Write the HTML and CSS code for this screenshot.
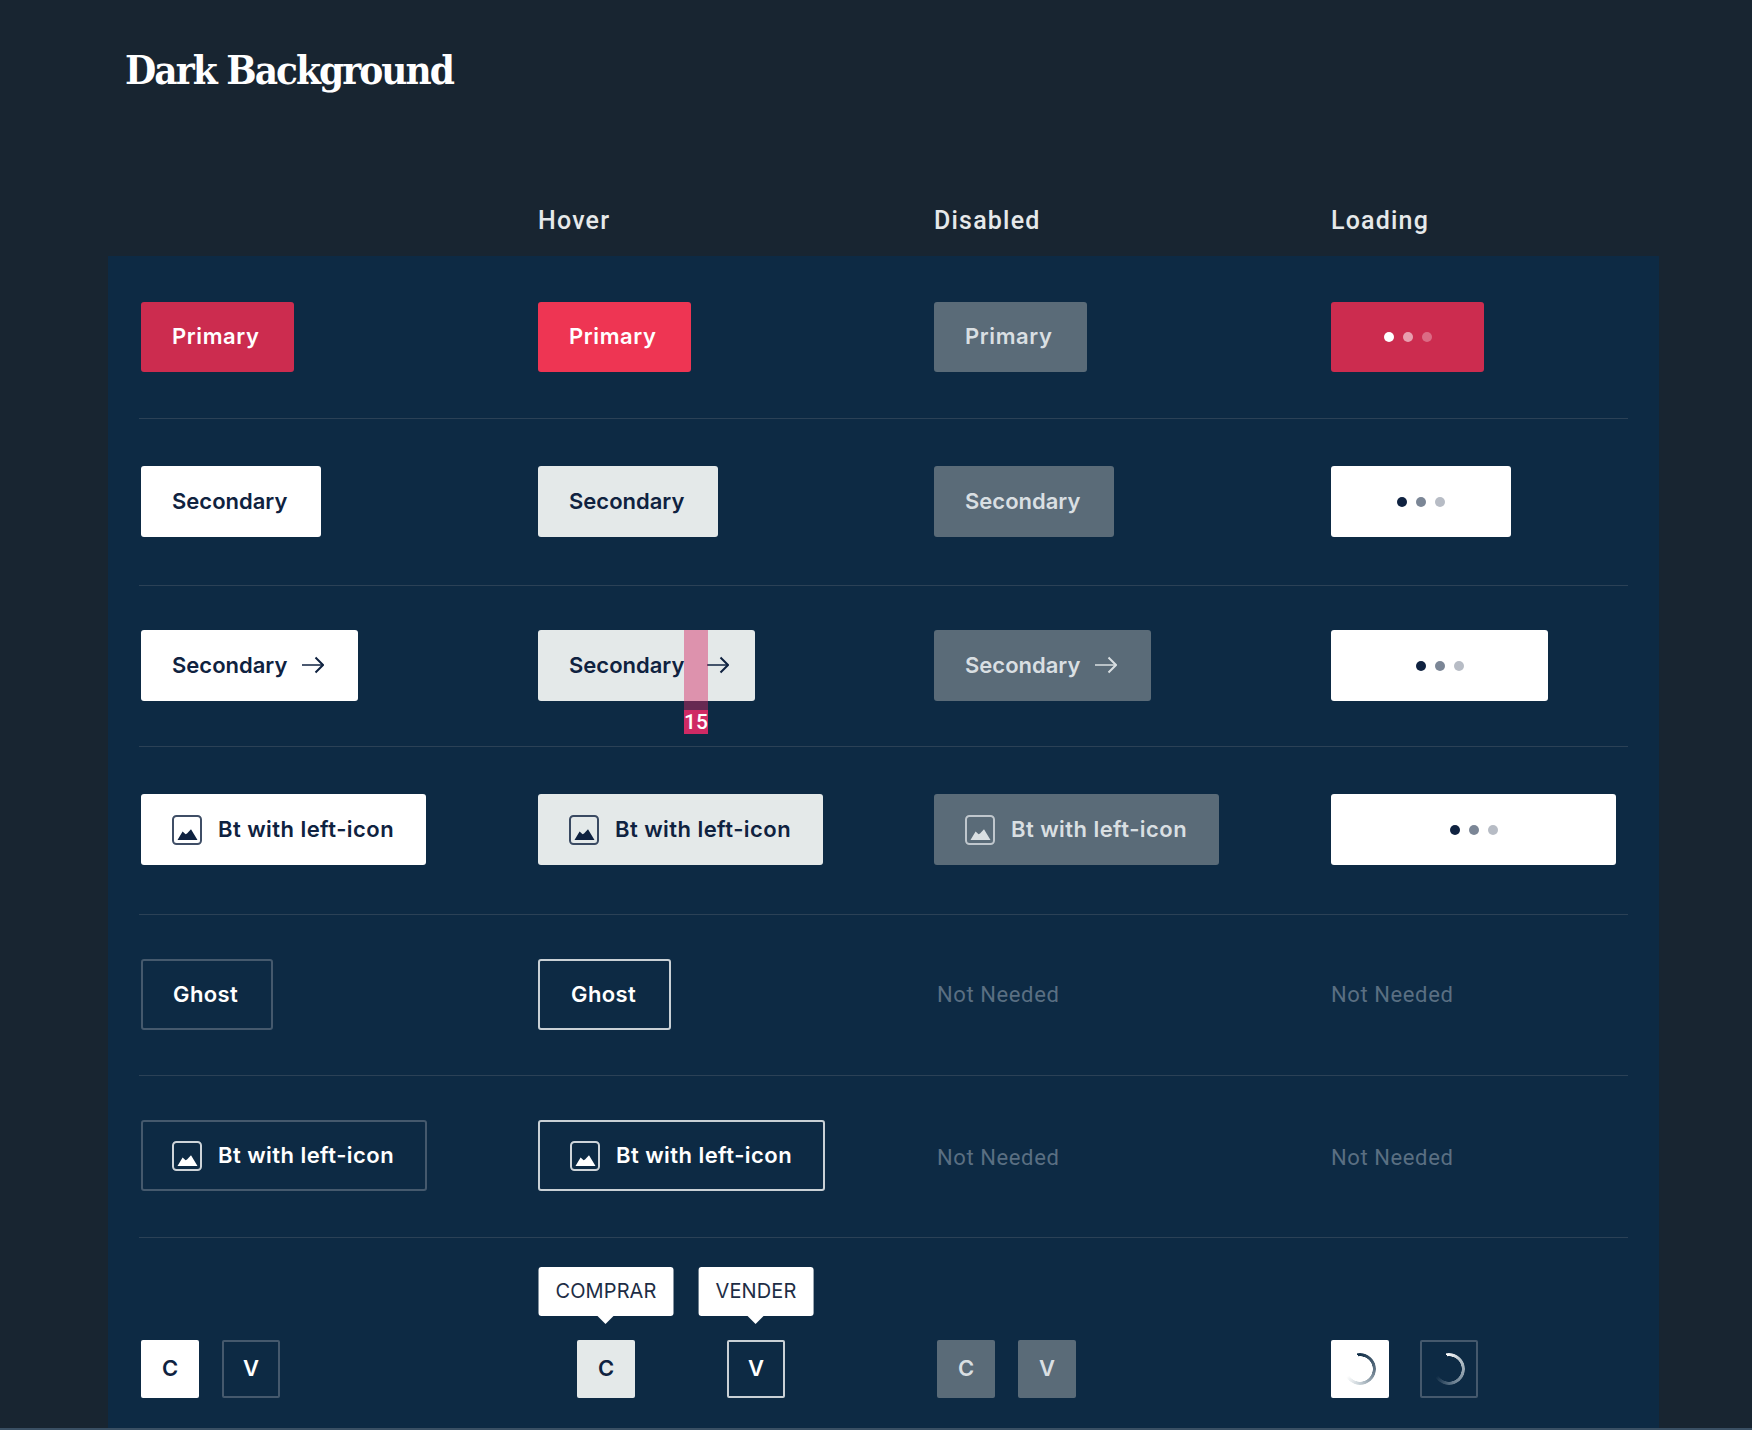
FILE: index.html
```html
<!DOCTYPE html>
<html lang="en">
<head>
<meta charset="utf-8">
<title>Dark Background</title>
<link rel="stylesheet" href="styles.css">
</head>
<body>
<svg class="defs" width="0" height="0" aria-hidden="true">
  <symbol id="pic" viewBox="0 0 30 30">
    <rect class="pic-frame" x="1" y="1" width="28" height="28" rx="3.5"/>
    <path class="pic-hill" d="M5.5 25 L10.6 16.4 L13.6 19.2 L15 18.600 L19 14.200 L25.500 25 Z"/>
  </symbol>
  <symbol id="arrow" viewBox="0 0 22 18">
    <path class="arrow-line" d="M0 9H20.500"/>
    <path class="arrow-head" d="M13.500 1.500L21 9l-7.500 7.500"/>
  </symbol>
</svg>
<main class="page">
  <h1 class="title">Dark Background</h1>
  <div class="heads">
    <div></div>
    <div class="head">Hover</div>
    <div class="head">Disabled</div>
    <div class="head">Loading</div>
  </div>
  <section class="panel">
    <div class="row r1">
      <a class="btn primary w153">Primary</a>
      <a class="btn primary-hover w153">Primary</a>
      <a class="btn disabled w153">Primary</a>
      <a class="btn primary w153"><span class="dots"><i></i><i></i><i></i></span></a>
    </div>
    <div class="row r2">
      <a class="btn white w180">Secondary</a>
      <a class="btn light w180">Secondary</a>
      <a class="btn disabled w180">Secondary</a>
      <a class="btn white w180"><span class="dots"><i></i><i></i><i></i></span></a>
    </div>
    <div class="row r3">
      <a class="btn white w217">Secondary<svg class="arrow"><use href="#arrow"/></svg></a>
      <a class="btn light w217">Secondary<svg class="arrow arrow-shift"><use href="#arrow"/></svg><span class="guide"><b class="guide-tag">15</b></span></a>
      <a class="btn disabled w217">Secondary<svg class="arrow"><use href="#arrow"/></svg></a>
      <a class="btn white w217"><span class="dots"><i></i><i></i><i></i></span></a>
    </div>
    <div class="row r4">
      <a class="btn white w285"><svg class="pic"><use href="#pic"/></svg>Bt with left-icon</a>
      <a class="btn light w285"><svg class="pic"><use href="#pic"/></svg>Bt with left-icon</a>
      <a class="btn disabled w285"><svg class="pic"><use href="#pic"/></svg>Bt with left-icon</a>
      <a class="btn white w285"><span class="dots"><i></i><i></i><i></i></span></a>
    </div>
    <div class="row r5">
      <a class="btn ghost w132">Ghost</a>
      <a class="btn ghost-hover w133">Ghost</a>
      <span class="none none-a">Not Needed</span>
      <span class="none">Not Needed</span>
    </div>
    <div class="row r6">
      <a class="btn ghost w286"><svg class="pic"><use href="#pic"/></svg>Bt with left-icon</a>
      <a class="btn ghost-hover w287"><svg class="pic"><use href="#pic"/></svg>Bt with left-icon</a>
      <span class="none none-a">Not Needed</span>
      <span class="none">Not Needed</span>
    </div>
    <div class="row last">
      <div class="tiles">
        <a class="tile white">C</a>
        <a class="tile ghost">V</a>
      </div>
      <div class="tiles tiles-hover">
        <a class="tile light">C<span class="tip">COMPRAR</span></a>
        <a class="tile ghost-hover">V<span class="tip">VENDER</span></a>
      </div>
      <div class="tiles tiles-disabled">
        <a class="tile disabled">C</a>
        <a class="tile disabled">V</a>
      </div>
      <div class="tiles tiles-loading">
        <a class="tile white"><span class="spin spin-dark"></span></a>
        <a class="tile ghost"><span class="spin spin-light"></span></a>
      </div>
    </div>
  </section>
</main>
</body>
</html>
```

FILE: styles.css
```css
* { box-sizing: border-box; }
html, body { margin: 0; padding: 0; }
body {
  background: #182531;
  height: 1430px;
  overflow: hidden;
  font-family: "Inter", "Liberation Sans", sans-serif;
}
.defs { position: absolute; }
.page {
  height: 1430px;
  padding: 0 93px 0 108px;
  border-bottom: 2px solid #3a5064;
  overflow: hidden;
}
.title {
  margin: 0;
  padding: 47px 0 0 17px;
  height: 200px;
  font-family: "DejaVu Serif", "Liberation Serif", serif;
  font-stretch: condensed;
  font-weight: 700;
  font-size: 40px;
  line-height: 46px;
  letter-spacing: -1.95px;
  color: #fff;
}
.heads {
  display: grid;
  grid-template-columns: 397px 396px 397px 1fr;
  height: 56px;
  padding-left: 33px;
}
.head {
  font-family: "Roboto", sans-serif;
  font-weight: 500;
  font-size: 25px;
  line-height: 42px;
  letter-spacing: 1.2px;
  color: #e6e9ea;
}
.panel {
  background: #0d2a44;
  height: 1172px;
  padding: 0 31px;
}
.row {
  display: grid;
  grid-template-columns: 397px 396px 397px 1fr;
  align-items: center;
  padding-left: 2px;
  border-bottom: 1px solid #2b4156;
}
.r1 { padding-top: 46px; padding-bottom: 46px; }
.r2 { padding-top: 47px; padding-bottom: 48px; }
.r3 { padding-top: 44px; padding-bottom: 45px; }
.r4 { padding-top: 47px; padding-bottom: 49px; }
.r5 { padding-top: 44px; padding-bottom: 45px; }
.r6 { padding-top: 44px; padding-bottom: 46px; }
.last { border-bottom: 0; padding-top: 102px; }

.btn {
  position: relative;
  display: inline-flex;
  align-items: center;
  height: 71px;
  padding-left: 31px;
  padding-bottom: 2px;
  border-radius: 3px;
  font-weight: 600;
  font-size: 22px;
  white-space: nowrap;
}
.r1 .btn { height: 70px; letter-spacing: .6px; padding-bottom: 2px; }
.r4 .btn, .r6 .btn { letter-spacing: .45px; }
.r5 .btn { letter-spacing: .4px; }
.w132 { width: 132px; }
.w133 { width: 133px; }
.w153 { width: 153px; }
.w180 { width: 180px; }
.w217 { width: 217px; }
.w285 { width: 285px; }
.w286 { width: 286px; }
.w287 { width: 287px; }

.primary { background: #cc2c4f; color: #fff; }
.primary-hover { background: #ee3553; color: #fff; }
.white { background: #fff; color: #0f2240; }
.light { background: #e4e9e9; color: #0f2240; }
.disabled { background: #5a6b78; color: #d9dfe2; }
.ghost { background: transparent; color: #fff; border: 2px solid #45596d; }
.ghost-hover { background: transparent; color: #fff; border: 2px solid #c9d0d5; }
.r5 .ghost { padding-left: 30px; }
.r5 .ghost-hover { padding-left: 31px; }
.r6 .ghost { padding-left: 29px; }
.r6 .ghost-hover { padding-left: 30px; }

.arrow { width: 22px; height: 18px; margin-left: 15px; }
.arrow-shift { margin-left: 23px; }
.arrow-line { fill: none; stroke: currentColor; stroke-width: 2; opacity: .75; }
.arrow-head { fill: none; stroke: currentColor; stroke-width: 2; }
.pic { width: 30px; height: 30px; margin-right: 16px; flex: none; position: relative; top: 1px; }
.pic-frame { fill: none; stroke: currentColor; stroke-width: 2; opacity: .8; }
.pic-hill { fill: currentColor; }

.guide {
  position: absolute;
  left: 146px;
  top: 0;
  bottom: -9px;
  width: 24px;
  background: rgba(212, 40, 100, .45);
}
.guide-tag {
  position: absolute;
  left: 0;
  right: 0;
  top: 100%;
  height: 24px;
  background: #cf2a64;
  color: #fff;
  font-family: "Roboto", sans-serif;
  font-weight: 500;
  font-size: 21px;
  line-height: 24px;
  text-align: center;
}

.dots {
  display: flex;
  flex: none;
  gap: 9px;
  margin-left: -31px;
  margin-top: 2px;
  width: calc(100% + 31px);
  justify-content: center;
}
.dots i {
  width: 10px;
  height: 10px;
  border-radius: 50%;
  background: currentColor;
}
.dots i:nth-child(2) { opacity: .55; }
.dots i:nth-child(3) { opacity: .3; }

.none {
  font-family: "Roboto", sans-serif;
  font-size: 22px;
  letter-spacing: .6px;
  color: #5a6f82;
}
.none-a { margin-left: 3px; }
.r6 .none { padding-top: 3px; }

.tiles { display: flex; gap: 23px; }
.tiles-hover { gap: 92px; padding-left: 39px; }
.tiles-disabled { padding-left: 3px; }
.tiles-loading { gap: 31px; }
.tile {
  position: relative;
  display: flex;
  align-items: center;
  justify-content: center;
  width: 58px;
  height: 58px;
  padding-bottom: 3px;
  border-radius: 2px;
  font-weight: 600;
  font-size: 22px;
}
.tip {
  position: absolute;
  left: 50%;
  bottom: 100%;
  margin-bottom: 24px;
  transform: translateX(-50%);
  height: 49px;
  padding: 0 17px 2px;
  display: flex;
  align-items: center;
  background: #fff;
  border-radius: 3px;
  color: #1d2d45;
  font-weight: 400;
  font-size: 20px;
  letter-spacing: .1px;
  white-space: nowrap;
}
.ghost-hover .tip { margin-bottom: 26px; }
.tip::after {
  content: "";
  position: absolute;
  left: 50%;
  top: 100%;
  margin-left: -8px;
  border: 8px solid transparent;
  border-bottom: 0;
  border-top-color: #fff;
}
.spin {
  width: 32px;
  height: 32px;
  margin-top: 3px;
  border-radius: 50%;
  -webkit-mask: radial-gradient(circle closest-side, transparent 12.5px, #000 13px);
  mask: radial-gradient(circle closest-side, transparent 12.5px, #000 13px);
}
.spin-dark { background: conic-gradient(from -10deg, #0d2a44 0deg, #5d7182 100deg, #c4ced4 190deg, rgba(255,255,255,0) 250deg); }
.spin-light { background: conic-gradient(from -10deg, #fff 0deg, #b8c3cb 60deg, #6d8192 170deg, rgba(13,42,68,0) 250deg); }
```
